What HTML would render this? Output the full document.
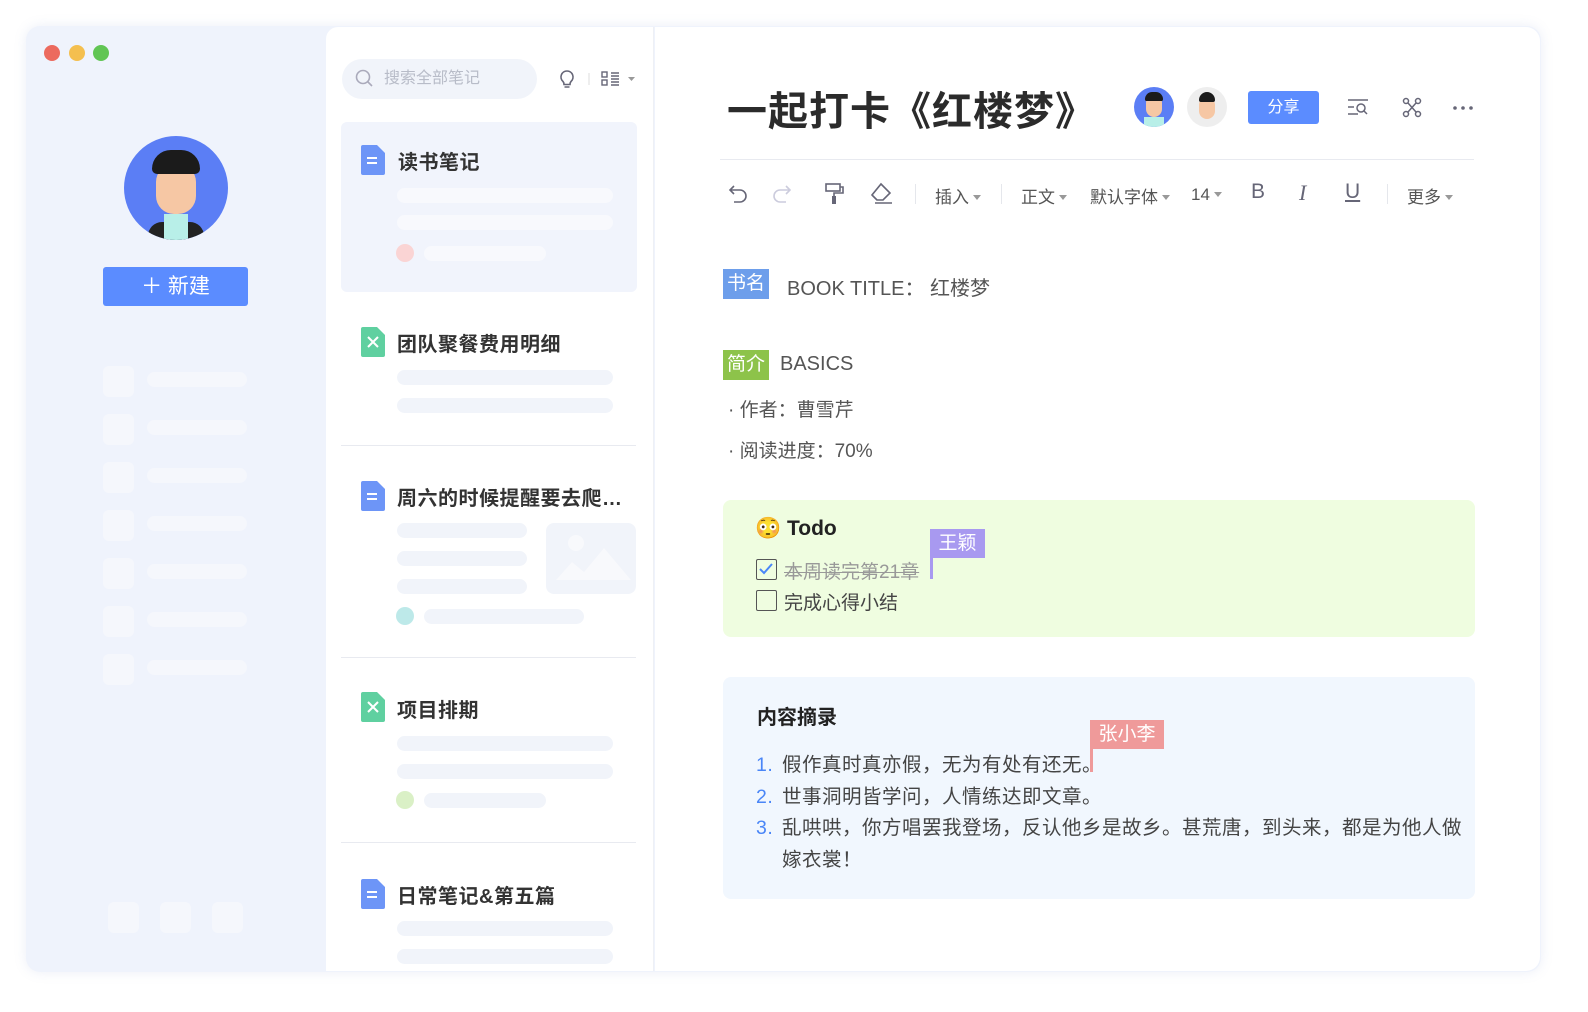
<!DOCTYPE html>
<html><head><meta charset="utf-8"><style>
*{margin:0;padding:0;box-sizing:border-box}
body{width:1588px;height:1012px;background:#fff;font-family:"Liberation Sans","Noto Sans CJK SC",sans-serif;position:relative;overflow:hidden;color:#333}
.a{position:absolute}
.win{left:26px;top:26px;width:1515px;height:946px;border-radius:14px;background:#eff3fc;box-shadow:0 0 12px rgba(120,140,200,.15);overflow:hidden}
.bar{position:absolute;background:#f1f4fa;border-radius:8px}
.sq{position:absolute;background:#f5f7fc;border-radius:6px;width:31px;height:31px}
.sl{position:absolute;background:#f5f7fc;border-radius:8px;height:15px}
.doc{position:absolute;width:26px;height:30px}
.title{position:absolute;font-size:20px;font-weight:bold;color:#333;letter-spacing:0.5px}
.tb{position:absolute;top:183px;font-size:17px;color:#555}
.tri{display:inline-block;border:4px solid transparent;border-top:5px solid #999;border-bottom:0;margin-left:4px;vertical-align:3px}
</style></head><body>
<div class="a win">
 <div class="a" style="left:18px;top:19px;width:16px;height:16px;border-radius:50%;background:#ec6a5e"></div>
 <div class="a" style="left:43px;top:19px;width:16px;height:16px;border-radius:50%;background:#f4bf4f"></div>
 <div class="a" style="left:67px;top:19px;width:16px;height:16px;border-radius:50%;background:#61c554"></div>
 <div class="a" style="left:98px;top:110px;width:104px;height:104px;border-radius:50%;background:#5b7ef5;overflow:hidden">
  <div class="a" style="left:32px;top:28px;width:40px;height:50px;border-radius:18px;background:#f6c7a4"></div>
  <div class="a" style="left:28px;top:14px;width:48px;height:24px;border-radius:22px 22px 6px 6px;background:#1b1b1b"></div>
  <div class="a" style="left:24px;top:86px;width:56px;height:30px;border-radius:14px;background:#222"></div>
  <div class="a" style="left:40px;top:78px;width:24px;height:30px;background:#b8efe8"></div>
 </div>
 <div class="a" style="left:77px;top:241px;width:145px;height:39px;background:#5b8cff;border-radius:3px;color:#fff;font-size:21px;text-align:center;line-height:39px">＋ 新建</div>
 <div class="sq" style="left:77px;top:340px"></div><div class="sl" style="left:121px;top:346px;width:100px"></div>
 <div class="sq" style="left:77px;top:388px"></div><div class="sl" style="left:121px;top:394px;width:100px"></div>
 <div class="sq" style="left:77px;top:436px"></div><div class="sl" style="left:121px;top:442px;width:100px"></div>
 <div class="sq" style="left:77px;top:484px"></div><div class="sl" style="left:121px;top:490px;width:100px"></div>
 <div class="sq" style="left:77px;top:532px"></div><div class="sl" style="left:121px;top:538px;width:100px"></div>
 <div class="sq" style="left:77px;top:580px"></div><div class="sl" style="left:121px;top:586px;width:100px"></div>
 <div class="sq" style="left:77px;top:628px"></div><div class="sl" style="left:121px;top:634px;width:100px"></div>
 <div class="sq" style="left:82px;top:876px"></div><div class="sq" style="left:134px;top:876px"></div><div class="sq" style="left:186px;top:876px"></div>
</div>
<div class="a" style="left:326px;top:27px;width:328px;height:944px;background:#fff;border-radius:12px 0 0 0;border-right:1px solid #eef0f5"></div>
<div class="a" style="left:342px;top:59px;width:195px;height:40px;background:#f1f4fa;border-radius:20px;color:#b8bcc8;font-size:16px;line-height:40px;padding-left:42px">搜索全部笔记</div>
<svg class="a" style="left:355px;top:69px" width="20" height="20"><circle cx="8" cy="8" r="6.5" stroke="#aab" stroke-width="1.6" fill="none"/><line x1="13" y1="13" x2="17" y2="17" stroke="#aab" stroke-width="1.6"/></svg>
<svg class="a" style="left:557px;top:68px" width="84" height="22"><path d="M10 3a6 6 0 0 0-4 10.5c1 1 1 2 1 3h6c0-1 0-2 1-3A6 6 0 0 0 10 3zM7.5 19h5" stroke="#667" stroke-width="1.6" fill="none"/><line x1="32" y1="5" x2="32" y2="17" stroke="#ddd"/><rect x="45" y="4" width="5" height="5" stroke="#667" fill="none" stroke-width="1.4"/><rect x="45" y="12" width="5" height="5" stroke="#667" fill="none" stroke-width="1.4"/><path d="M54 5h8M54 8h8M54 11h8M54 14h8M54 17h8" stroke="#667" stroke-width="1.4"/><path d="M71 9h7l-3.5 4z" fill="#999"/></svg>
<div class="a" style="left:341px;top:122px;width:296px;height:170px;background:#f1f4fc;border-radius:6px"></div>
<svg class="doc" style="left:361px;top:145px"><path d="M0 2a2 2 0 0 1 2-2h14l8 8v20a2 2 0 0 1-2 2H2a2 2 0 0 1-2-2z" fill="#6d95f7"/><path d="M6 13h10M6 18h10" stroke="#fff" stroke-width="2"/></svg>
<div class="title" style="left:398px;top:146px">读书笔记</div>
<div class="bar" style="left:397px;top:188px;width:216px;height:15px;background:#f8f9fd"></div>
<div class="bar" style="left:397px;top:215px;width:216px;height:15px;background:#f8f9fd"></div>
<div class="a" style="left:396px;top:244px;width:18px;height:18px;border-radius:50%;background:#fad4d4"></div>
<div class="bar" style="left:424px;top:246px;width:122px;height:15px;background:#f8f9fd"></div>

<svg class="doc" style="left:361px;top:327px"><path d="M0 2a2 2 0 0 1 2-2h14l8 8v20a2 2 0 0 1-2 2H2a2 2 0 0 1-2-2z" fill="#5fd0a0"/><path d="M7 10l10 10M17 10L7 20" stroke="#fff" stroke-width="2"/></svg>
<div class="title" style="left:397px;top:328px">团队聚餐费用明细</div>
<div class="bar" style="left:397px;top:370px;width:216px;height:15px"></div>
<div class="bar" style="left:397px;top:398px;width:216px;height:15px"></div>
<div class="a" style="left:341px;top:445px;width:295px;height:1px;background:#e8eaf0"></div>

<svg class="doc" style="left:361px;top:481px"><path d="M0 2a2 2 0 0 1 2-2h14l8 8v20a2 2 0 0 1-2 2H2a2 2 0 0 1-2-2z" fill="#6d95f7"/><path d="M6 13h10M6 18h10" stroke="#fff" stroke-width="2"/></svg>
<div class="title" style="left:397px;top:482px">周六的时候提醒要去爬…</div>
<div class="bar" style="left:397px;top:523px;width:130px;height:15px"></div>
<div class="bar" style="left:397px;top:551px;width:130px;height:15px"></div>
<div class="bar" style="left:397px;top:579px;width:130px;height:15px"></div>
<div class="a" style="left:546px;top:523px;width:90px;height:71px;background:#f1f4fa;border-radius:8px"><svg width="90" height="71"><circle cx="30" cy="20" r="8" fill="#f8f9fc"/><path d="M10 57l16-18 12 10 20-24 27 32z" fill="#f8f9fc"/></svg></div>
<div class="a" style="left:396px;top:607px;width:18px;height:18px;border-radius:50%;background:#bde9e9"></div>
<div class="bar" style="left:424px;top:609px;width:160px;height:15px"></div>
<div class="a" style="left:341px;top:657px;width:295px;height:1px;background:#e8eaf0"></div>

<svg class="doc" style="left:361px;top:692px"><path d="M0 2a2 2 0 0 1 2-2h14l8 8v20a2 2 0 0 1-2 2H2a2 2 0 0 1-2-2z" fill="#5fd0a0"/><path d="M7 10l10 10M17 10L7 20" stroke="#fff" stroke-width="2"/></svg>
<div class="title" style="left:397px;top:694px">项目排期</div>
<div class="bar" style="left:397px;top:736px;width:216px;height:15px"></div>
<div class="bar" style="left:397px;top:764px;width:216px;height:15px"></div>
<div class="a" style="left:396px;top:791px;width:18px;height:18px;border-radius:50%;background:#daf0c6"></div>
<div class="bar" style="left:424px;top:793px;width:122px;height:15px"></div>
<div class="a" style="left:341px;top:842px;width:295px;height:1px;background:#e8eaf0"></div>

<svg class="doc" style="left:361px;top:879px"><path d="M0 2a2 2 0 0 1 2-2h14l8 8v20a2 2 0 0 1-2 2H2a2 2 0 0 1-2-2z" fill="#6d95f7"/><path d="M6 13h10M6 18h10" stroke="#fff" stroke-width="2"/></svg>
<div class="title" style="left:397px;top:880px">日常笔记&amp;第五篇</div>
<div class="bar" style="left:397px;top:921px;width:216px;height:15px"></div>
<div class="bar" style="left:397px;top:949px;width:216px;height:15px"></div>

<div class="a" style="left:655px;top:27px;width:885px;height:944px;background:#fff;border-radius:0 14px 14px 0"></div>
<div class="a" style="left:727px;top:79px;font-size:40px;font-weight:bold;color:#2b2b2b;letter-spacing:1px">一起打卡《红楼梦》</div>
<div class="a" style="left:1134px;top:87px;width:40px;height:40px;border-radius:50%;background:#5b7ef5;overflow:hidden"><div class="a" style="left:12px;top:8px;width:16px;height:22px;border-radius:8px;background:#f6c7a4"></div><div class="a" style="left:11px;top:5px;width:18px;height:9px;border-radius:8px 8px 2px 2px;background:#1b1b1b"></div><div class="a" style="left:10px;top:30px;width:20px;height:12px;background:#b8efe8"></div></div>
<div class="a" style="left:1187px;top:87px;width:40px;height:40px;border-radius:50%;background:#eee;overflow:hidden"><div class="a" style="left:12px;top:10px;width:16px;height:22px;border-radius:8px;background:#f6c7a4"></div><div class="a" style="left:12px;top:5px;width:16px;height:10px;border-radius:8px 8px 2px 2px;background:#1b1b1b"></div></div>
<div class="a" style="left:1248px;top:91px;width:71px;height:33px;background:#5b8cff;border-radius:3px;color:#fff;font-size:16px;text-align:center;line-height:33px">分享</div>
<svg class="a" style="left:1346px;top:96px" width="140" height="24"><path d="M2 4h20M2 11h6M2 18h10" stroke="#667" stroke-width="1.5"/><circle cx="15" cy="12" r="4" stroke="#667" stroke-width="1.5" fill="none"/><path d="M18 15l3 3" stroke="#667" stroke-width="1.5"/><g stroke="#667" stroke-width="1.5" fill="none"><circle cx="60" cy="5" r="2.5"/><circle cx="72" cy="5" r="2.5"/><circle cx="60" cy="18" r="2.5"/><circle cx="72" cy="18" r="2.5"/><path d="M62 7l8 9M70 7l-8 9"/></g><circle cx="109" cy="12" r="1.8" fill="#667"/><circle cx="117" cy="12" r="1.8" fill="#667"/><circle cx="125" cy="12" r="1.8" fill="#667"/></svg>
<div class="a" style="left:720px;top:159px;width:754px;height:1px;background:#e8eaf0"></div>
<svg class="a" style="left:726px;top:180px" width="180" height="26"><path d="M8 6L4 10l4 4M4 10h10a6 6 0 0 1 0 12H8" stroke="#667" stroke-width="1.6" fill="none"/><path d="M60 6l4 4-4 4M64 10H54a6 6 0 0 0 0 12h6" stroke="#ccd" stroke-width="1.6" fill="none"/><rect x="100" y="4" width="14" height="7" stroke="#667" stroke-width="1.6" fill="none"/><path d="M114 7h3v6h-9v4" stroke="#667" stroke-width="1.6" fill="none"/><rect x="106" y="16" width="4" height="8" fill="#667"/><path d="M155 4l9 9-7 7h-6l-5-5zM146 15l5 5M149 23h17" stroke="#667" stroke-width="1.6" fill="none"/></svg>
<div class="a" style="left:915px;top:184px;width:1px;height:20px;background:#e5e7ec"></div>
<div class="tb" style="left:935px">插入<span class="tri"></span></div>
<div class="a" style="left:1001px;top:184px;width:1px;height:20px;background:#e5e7ec"></div>
<div class="tb" style="left:1021px">正文<span class="tri"></span></div>
<div class="tb" style="left:1090px">默认字体<span class="tri"></span></div>
<div class="tb" style="left:1191px;top:185px">14<span class="tri"></span></div>
<div class="tb" style="left:1251px;font-size:21px;top:180px;color:#667">B</div>
<div class="tb" style="left:1299px;font-size:22px;top:180px;color:#667;font-style:italic;font-family:'Liberation Serif',serif">I</div>
<div class="tb" style="left:1345px;font-size:21px;top:180px;color:#667;text-decoration:underline">U</div>
<div class="a" style="left:1387px;top:184px;width:1px;height:20px;background:#e5e7ec"></div>
<div class="tb" style="left:1407px">更多<span class="tri"></span></div>

<div class="a" style="left:723px;top:269px;width:46px;height:30px;background:#6d9eeb;color:#fff;font-size:19px;text-align:center;line-height:30px">书名</div>
<div class="a" style="left:787px;top:272px;font-size:20px;color:#555">BOOK TITLE： 红楼梦</div>
<div class="a" style="left:723px;top:350px;width:46px;height:30px;background:#8dc34a;color:#fff;font-size:19px;text-align:center;line-height:30px">简介</div>
<div class="a" style="left:780px;top:353px;font-size:20px;color:#555">BASICS</div>
<div class="a" style="left:728px;top:395px;font-size:19px;color:#555">· 作者：曹雪芹</div>
<div class="a" style="left:728px;top:436px;font-size:19px;color:#555">· 阅读进度：70%</div>

<div class="a" style="left:723px;top:500px;width:752px;height:137px;background:#effde0;border-radius:8px"></div>
<div class="a" style="left:755px;top:517px;font-size:21px;font-weight:bold;color:#222">😳 Todo</div>
<div class="a" style="left:756px;top:559px;width:21px;height:21px;border:1.5px solid #555;border-radius:2px"><svg width="18" height="18"><path d="M3 9l4 4 8-9" stroke="#4a86f7" stroke-width="2" fill="none"/></svg></div>
<div class="a" style="left:784px;top:557px;font-size:19px;color:#999;text-decoration:line-through">本周读完第21章</div>
<div class="a" style="left:756px;top:590px;width:21px;height:21px;border:1.5px solid #555;border-radius:2px"></div>
<div class="a" style="left:784px;top:588px;font-size:19px;color:#444">完成心得小结</div>
<div class="a" style="left:930px;top:555px;width:3px;height:24px;background:#a899f0"></div>
<div class="a" style="left:930px;top:529px;width:55px;height:29px;background:#a899f0;color:#fff;font-size:19px;text-align:center;line-height:29px">王颖</div>

<div class="a" style="left:723px;top:677px;width:752px;height:222px;background:#f1f7fe;border-radius:8px"></div>
<div class="a" style="left:757px;top:701px;font-size:20px;font-weight:bold;color:#222">内容摘录</div>
<div class="a" style="left:756px;top:750px;font-size:19.5px;color:#444;line-height:31.5px;width:740px;letter-spacing:0.5px;white-space:nowrap">
<div><span style="color:#4a86f7;display:inline-block;width:26px">1.</span>假作真时真亦假，无为有处有还无。</div>
<div><span style="color:#4a86f7;display:inline-block;width:26px">2.</span>世事洞明皆学问，人情练达即文章。</div>
<div><span style="color:#4a86f7;display:inline-block;width:26px">3.</span>乱哄哄，你方唱罢我登场，反认他乡是故乡。甚荒唐，到头来，都是为他人做<br><span style="display:inline-block;width:26px"></span>嫁衣裳！</div>
</div>
<div class="a" style="left:1090px;top:745px;width:3px;height:27px;background:#ef9a9a"></div>
<div class="a" style="left:1090px;top:720px;width:74px;height:29px;background:#ef9a9a;color:#fff;font-size:19px;text-align:center;line-height:29px">张小李</div>
</body></html>
